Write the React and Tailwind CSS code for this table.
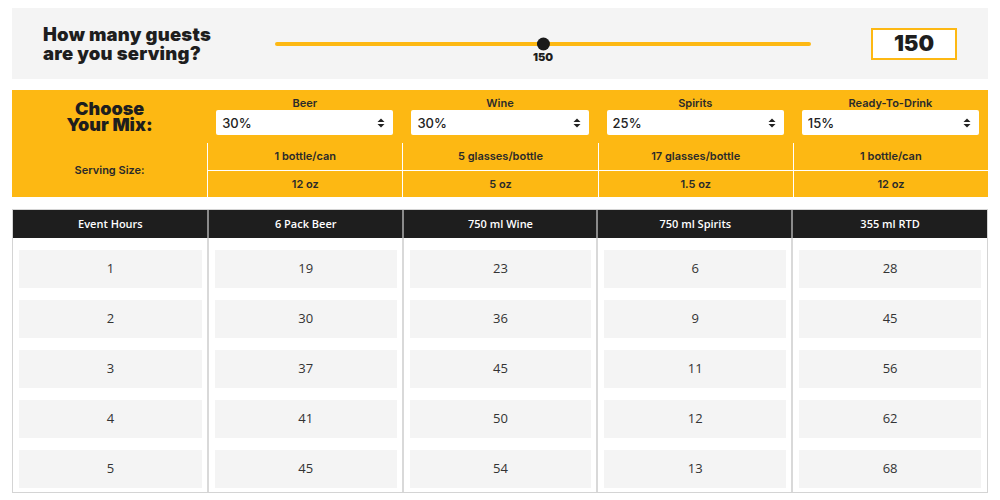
import React, { useState } from 'react';

const YELLOW = '#fdb813';

const drinks = [
  { key: 'beer', label: 'Beer', mix: '30%', serving: '1 bottle/can', size: '12 oz', unit: '6 Pack Beer' },
  { key: 'wine', label: 'Wine', mix: '30%', serving: '5 glasses/bottle', size: '5 oz', unit: '750 ml Wine' },
  { key: 'spirits', label: 'Spirits', mix: '25%', serving: '17 glasses/bottle', size: '1.5 oz', unit: '750 ml Spirits' },
  { key: 'rtd', label: 'Ready-To-Drink', mix: '15%', serving: '1 bottle/can', size: '12 oz', unit: '355 ml RTD' },
];

// quantities per event hour, already worked out for 150 guests
const rows = [
  [1, 19, 23, 6, 28],
  [2, 30, 36, 9, 45],
  [3, 37, 45, 11, 56],
  [4, 41, 50, 12, 62],
  [5, 45, 54, 13, 68],
];

const percents = Array.from({ length: 21 }, (_, i) => `${i * 5}%`);

const SortArrows = () => (
  <svg width="8" height="10" viewBox="0 0 8 10" className="pointer-events-none absolute right-[8px] top-1/2 -translate-y-1/2">
    <path d="M4 0.5 L7.5 4 L0.5 4 Z" fill="#222" />
    <path d="M4 9.5 L7.5 6 L0.5 6 Z" fill="#222" />
  </svg>
);

const MixSelect = ({ value, onChange }) => (
  <div className="relative w-full">
    <select
      value={value}
      onChange={(e) => onChange(e.target.value)}
      className="block h-[25px] w-full appearance-none rounded-[2px] bg-white pl-[6px] pt-[2px] text-[13px] font-medium text-[#222] outline-none"
    >
      {percents.map((p) => (
        <option key={p} value={p}>{p}</option>
      ))}
    </select>
    <SortArrows />
  </div>
);

export default function App() {
  const [guests, setGuests] = useState(150);
  const [mix, setMix] = useState(() => Object.fromEntries(drinks.map((d) => [d.key, d.mix])));
  const pct = ((guests - 1) / (299 - 1)) * 100;

  return (
    <div className="min-h-[500px] bg-white px-[12px] pt-[8px] font-['Inter',sans-serif] text-[#222]">
      {/* guests */}
      <div className="flex h-[71px] items-center bg-[#f4f4f4] px-[31px]">
        <h2 className="w-[232px] text-[18.5px] font-black tracking-[0.2px] text-[#1e1e1e]">
          <span className="block h-[19px] leading-[19px]">How many guests</span>
          <span className="block h-[19px] leading-[19px]">are you serving?</span>
        </h2>
        <div className="relative mr-[60px] flex-1">
          <div className="h-[4px] rounded-full" style={{ background: YELLOW }} />
          <div
            className="absolute top-1/2 flex -translate-x-1/2 -translate-y-[6.5px] flex-col items-center"
            style={{ left: `${pct}%` }}
          >
            <div className="h-[13px] w-[13px] rounded-full bg-[#1a1a1a]" />
            <span className="text-[11px] font-black leading-[12px] text-[#1e1e1e]">{guests}</span>
          </div>
          <input
            type="range"
            min="1"
            max="299"
            value={guests}
            onChange={(e) => setGuests(Number(e.target.value))}
            className="absolute inset-x-0 -top-[6px] h-[16px] w-full cursor-pointer opacity-0"
          />
        </div>
        <div className="flex h-[32px] w-[86px] items-center justify-center border-2 border-[#fdb813] bg-white text-[22px] font-black text-[#1e1e1e]">
          {guests}
        </div>
      </div>

      {/* mix */}
      <div className="mt-[11px] bg-[#fdb813]">
        <div className="grid h-[53px] grid-cols-5">
          <div className="flex flex-col items-center justify-center text-center text-[18px] font-black text-[#1e1e1e]">
            <span className="block h-[16px] leading-[16px]">Choose</span>
            <span className="block h-[16px] leading-[16px]">Your Mix:</span>
          </div>
          {drinks.map((d) => (
            <div key={d.key} className="flex flex-col items-center px-[9px] pt-[6px]">
              <span className="text-[11px] font-semibold leading-[14px] text-[#2a2a2a]">{d.label}</span>
              <MixSelect value={mix[d.key]} onChange={(v) => setMix({ ...mix, [d.key]: v })} />
            </div>
          ))}
        </div>
        <div className="grid h-[54px] grid-cols-5">
          <div className="flex items-center justify-center text-[11px] font-semibold text-[#2a2a2a]">Serving Size:</div>
          {drinks.map((d) => (
            <div key={d.key} className="flex flex-col border-l border-white text-[11px] font-semibold text-[#2a2a2a]">
              <div className="flex flex-1 items-center justify-center border-b border-white">{d.serving}</div>
              <div className="flex flex-1 items-center justify-center">{d.size}</div>
            </div>
          ))}
        </div>
      </div>

      {/* results */}
      <div className="mt-[12px] border border-[#d4d4d4] font-['Open_Sans',sans-serif]">
        <div className="grid h-[28px] grid-cols-5 bg-[#1e1e1e] text-[11px] font-semibold text-white">
          <div className="flex items-center justify-center">Event Hours</div>
          {drinks.map((d) => (
            <div key={d.key} className="-ml-[1px] flex items-center justify-center border-l-2 border-[#8a8a8a]">{d.unit}</div>
          ))}
        </div>
        <div className="grid grid-cols-5">
          {[0, 1, 2, 3, 4].map((col) => (
            <div
              key={col}
              className={`flex flex-col gap-[12px] px-[6px] pb-[4px] pt-[12px] ${col > 0 ? '-ml-[1px] border-l-2 border-[#d9d9d9]' : ''}`}
            >
              {rows.map((r) => (
                <div key={r[0]} className="flex h-[38px] items-center justify-center bg-[#f4f4f4] text-[13px] text-[#333]">
                  {r[col]}
                </div>
              ))}
            </div>
          ))}
        </div>
      </div>
    </div>
  );
}
